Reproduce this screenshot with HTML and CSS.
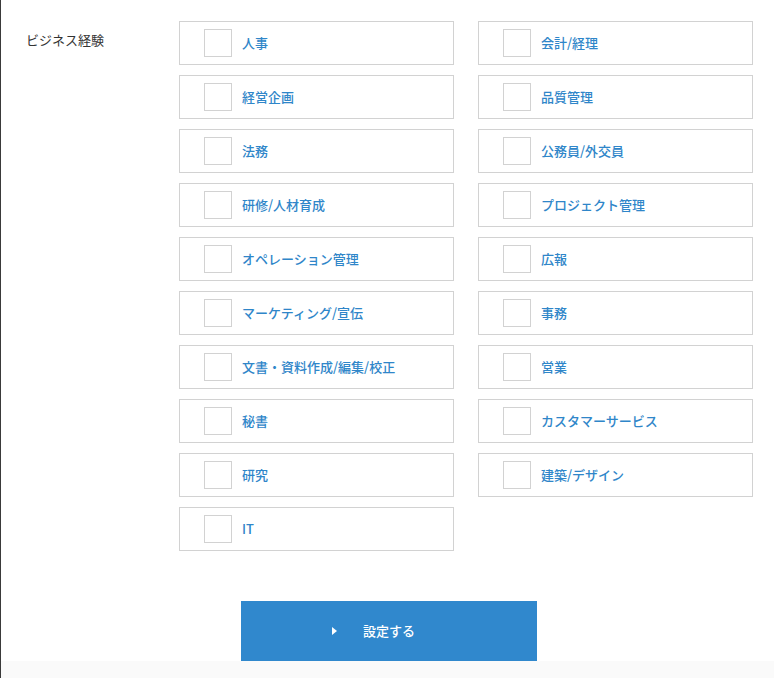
FILE: index.html
```html
<!DOCTYPE html>
<html lang="ja">
<head>
<meta charset="utf-8">
<link rel="stylesheet" href="styles.css">
</head>
<body>
<div class="page">
  <div class="field">
    <div class="field-label">ビジネス経験</div>
    <div class="options">
      <label class="option"><span class="check"></span><span class="opt-text">人事</span></label>
      <label class="option"><span class="check"></span><span class="opt-text">会計/経理</span></label>
      <label class="option"><span class="check"></span><span class="opt-text">経営企画</span></label>
      <label class="option"><span class="check"></span><span class="opt-text">品質管理</span></label>
      <label class="option"><span class="check"></span><span class="opt-text">法務</span></label>
      <label class="option"><span class="check"></span><span class="opt-text">公務員/外交員</span></label>
      <label class="option"><span class="check"></span><span class="opt-text">研修/人材育成</span></label>
      <label class="option"><span class="check"></span><span class="opt-text">プロジェクト管理</span></label>
      <label class="option"><span class="check"></span><span class="opt-text">オペレーション管理</span></label>
      <label class="option"><span class="check"></span><span class="opt-text">広報</span></label>
      <label class="option"><span class="check"></span><span class="opt-text">マーケティング/宣伝</span></label>
      <label class="option"><span class="check"></span><span class="opt-text">事務</span></label>
      <label class="option"><span class="check"></span><span class="opt-text">文書・資料作成/編集/校正</span></label>
      <label class="option"><span class="check"></span><span class="opt-text">営業</span></label>
      <label class="option"><span class="check"></span><span class="opt-text">秘書</span></label>
      <label class="option"><span class="check"></span><span class="opt-text">カスタマーサービス</span></label>
      <label class="option"><span class="check"></span><span class="opt-text">研究</span></label>
      <label class="option"><span class="check"></span><span class="opt-text">建築/デザイン</span></label>
      <label class="option"><span class="check"></span><span class="opt-text">IT</span></label>
    </div>
  </div>
  <div class="actions">
    <button class="submit" type="button"><span class="submit-text">設定する</span></button>
  </div>
</div>
<div class="footer"></div>
</body>
</html>
```

FILE: styles.css
```css
html, body {
  margin: 0;
  padding: 0;
}
body {
  background: #ffffff;
  border-left: 1px solid #3a3a3a;
  font-family: "Noto Sans CJK JP", "Noto Sans", sans-serif;
  color: #333333;
  height: 678px;
  box-sizing: border-box;
  display: flex;
  flex-direction: column;
  overflow: hidden;
}
.page {
  padding-top: 21px;
  height: 640px;
}
.field {
  display: flex;
}
.field-label {
  width: 153px;
  padding-left: 25px;
  font-size: 13px;
  line-height: 44px;
  height: 44px;
  margin-top: -3px;
  color: #333333;
}
.options {
  display: grid;
  grid-template-columns: 275px 275px;
  column-gap: 24px;
  row-gap: 10px;
}
.option {
  box-sizing: border-box;
  height: 44px;
  border: 1px solid #d2d2d2;
  display: flex;
  align-items: center;
  padding-left: 24px;
}
.check {
  box-sizing: border-box;
  width: 28px;
  height: 28px;
  border: 1px solid #d2d2d2;
  background: #fff;
  flex: none;
}
.opt-text {
  margin-left: 10px;
  margin-top: -2px;
  font-size: 13px;
  font-weight: 500;
  color: #2f86c9;
  line-height: 1;
}
.actions {
  margin-top: 50px;
  padding-left: 240px;
}
.submit {
  width: 296px;
  height: 60px;
  border: none;
  background: #3088cd;
  color: #ffffff;
  font-family: "Noto Sans CJK JP", "Noto Sans", sans-serif;
  font-size: 13px;
  font-weight: 500;
  display: flex;
  align-items: center;
  justify-content: center;
  padding: 0 0 1px;
}
.submit-text {
  position: relative;
}
.submit-text::before {
  content: "";
  position: absolute;
  left: -31px;
  top: 50%;
  margin-top: -4px;
  border-left: 5px solid #ffffff;
  border-top: 4px solid transparent;
  border-bottom: 4px solid transparent;
}
.footer {
  flex: 1;
  background: #fafafa;
}
```
